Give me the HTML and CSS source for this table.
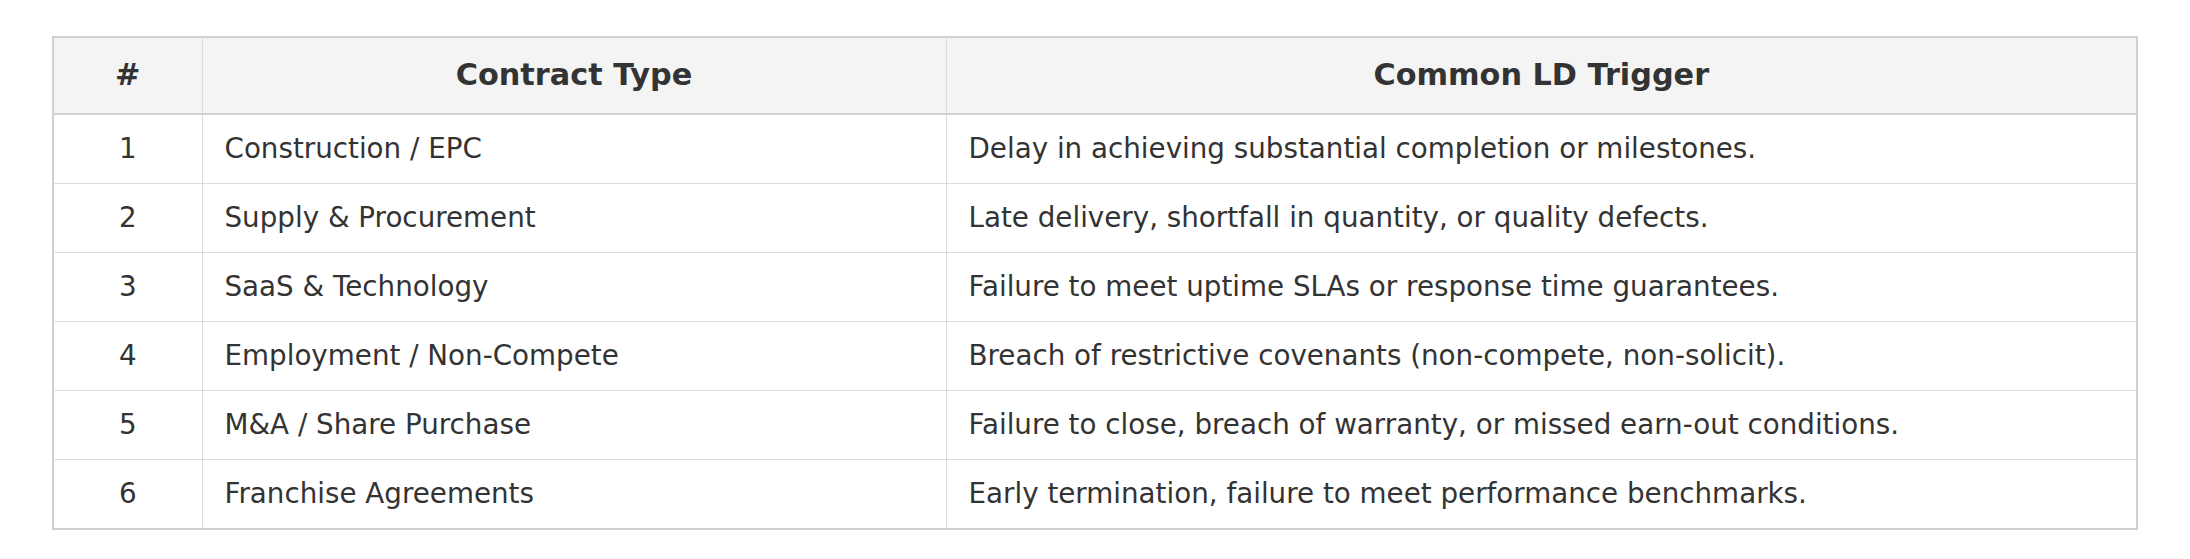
FILE: index.html
```html
<!DOCTYPE html>
<html>
<head>
<meta charset="utf-8">
<link rel="stylesheet" href="styles.css">
</head>
<body>
<div class="wrap">
<table class="ld-table">
  <colgroup>
    <col class="c-num">
    <col class="c-type">
    <col class="c-trig">
  </colgroup>
  <thead>
    <tr><th>#</th><th>Contract Type</th><th>Common LD Trigger</th></tr>
  </thead>
  <tbody>
    <tr><td class="num">1</td><td>Construction / EPC</td><td>Delay in achieving substantial completion or milestones.</td></tr>
    <tr><td class="num">2</td><td>Supply &amp; Procurement</td><td>Late delivery, shortfall in quantity, or quality defects.</td></tr>
    <tr><td class="num">3</td><td>SaaS &amp; Technology</td><td>Failure to meet uptime SLAs or response time guarantees.</td></tr>
    <tr><td class="num">4</td><td>Employment / Non-Compete</td><td>Breach of restrictive covenants (non-compete, non-solicit).</td></tr>
    <tr><td class="num">5</td><td>M&amp;A / Share Purchase</td><td>Failure to close, breach of warranty, or missed earn-out conditions.</td></tr>
    <tr><td class="num">6</td><td>Franchise Agreements</td><td>Early termination, failure to meet performance benchmarks.</td></tr>
  </tbody>
</table>
</div>
</body>
</html>
```

FILE: styles.css
```css
html, body {
  margin: 0;
  padding: 0;
  background: #ffffff;
}
.wrap {
  padding: 36px 52px;
}
.ld-table {
  width: 100%;
  border-collapse: collapse;
  table-layout: fixed;
  border: 2px solid #d0d0d0;
  font-family: "DejaVu Sans", sans-serif;
  font-size: 27.75px;
  color: #333333;
}
.c-num { width: 149px; }
.c-type { width: 744px; }
.ld-table th,
.ld-table td {
  border: 1px solid #dcdcdc;
  line-height: 34px;
}
.ld-table th {
  background: #f4f4f4;
  font-weight: bold;
  font-size: 30.3px;
  text-align: center;
  padding: 20px 22px 21px;
  border-bottom: 2px solid #d0d0d0;
}
.ld-table td {
  padding: 17px 22px;
  text-align: left;
}
.ld-table td.num {
  text-align: center;
}
```
